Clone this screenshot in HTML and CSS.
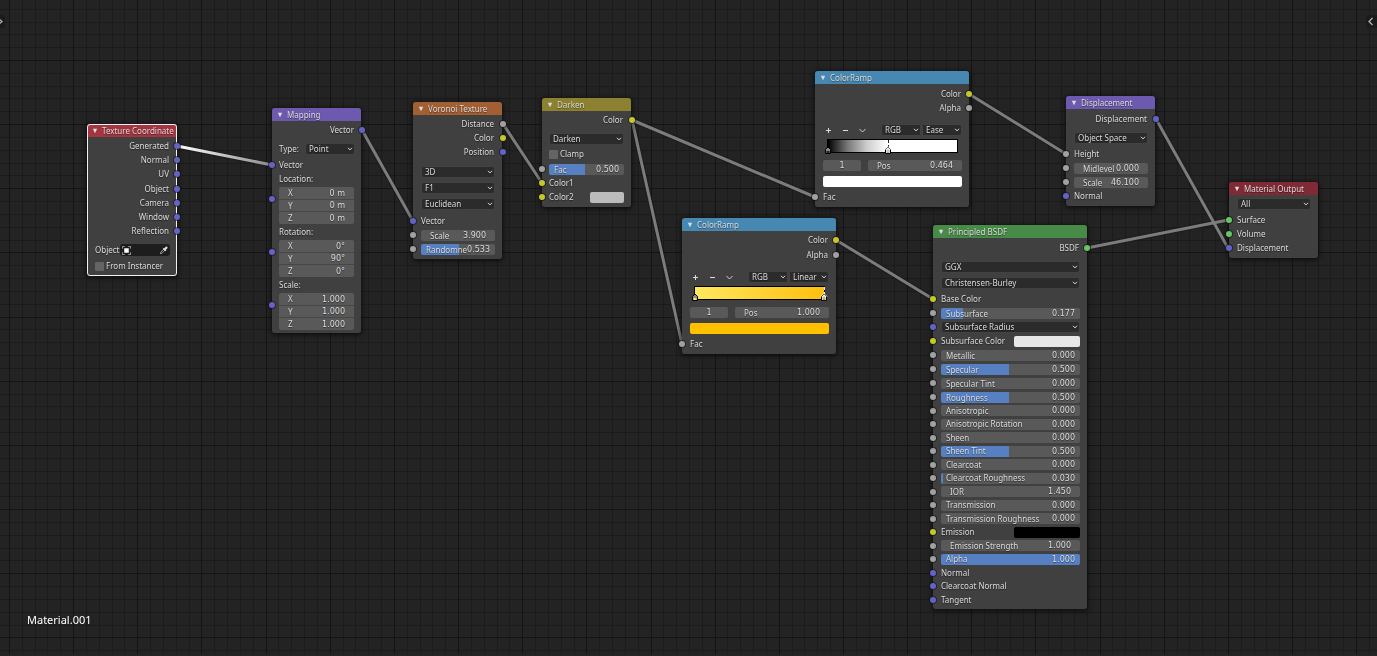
FILE: index.html
```html
<!DOCTYPE html>
<html lang="en">
<head>
<meta charset="utf-8">
<title>Shader Editor</title>
<link rel="stylesheet" href="styles.css">
</head>
<body>
<svg class="defs" aria-hidden="true">
  <symbol id="tri" viewBox="0 0 6 6"><path d="M0.800 0.800H5.200L3 5.200Z" fill="currentColor"/></symbol>
  <symbol id="chev" viewBox="0 0 6 4"><path d="M1 0.8L3 2.9L5 0.8" fill="none" stroke="currentColor" stroke-width="1"/></symbol>
  <symbol id="down" viewBox="0 0 9 9"><path d="M1.500 3L4.500 6L7.500 3" fill="none" stroke="currentColor" stroke-width="0.900"/></symbol>
  <symbol id="plus" viewBox="0 0 9 9"><path d="M4.500 2V7M2 4.500H7" fill="none" stroke="currentColor" stroke-width="1"/></symbol>
  <symbol id="minus" viewBox="0 0 9 9"><path d="M2 4.500H7" fill="none" stroke="currentColor" stroke-width="1"/></symbol>
  <symbol id="stop" viewBox="0 0 8 10"><path d="M1.500 8.500V4.500L4 2L6.500 4.500V8.500Z" fill="#8a8a8a" stroke="#000"/><rect x="2.500" y="6" width="3" height="2" fill="var(--stop)"/></symbol>
  <symbol id="stop-on" viewBox="0 0 8 10"><path d="M1.500 8.500V4.500L4 2L6.500 4.500V8.500Z" fill="#fff" stroke="#000"/><path d="M1 4.500L4 1.500L7 4.500" fill="none" stroke="#fff" stroke-width="0.800"/><path d="M3 7.700V5.500L4 4.500L5 5.500V7.700Z" fill="var(--stop)" stroke="#777" stroke-width="0.600"/></symbol>
</svg>

<main class="editor">
  <canvas class="grid" id="grid"></canvas>

  <svg class="links" aria-hidden="true">
    <defs>
      <linearGradient id="lit" gradientUnits="userSpaceOnUse" x1="177" y1="146" x2="272" y2="165"><stop offset="0" stop-color="#fff"/><stop offset="1" stop-color="#8a8a8a"/></linearGradient>
    </defs>
    <g class="link-edge">
      <path d="M177 146L272 165"/><path d="M362 130L413 221"/><path d="M503 124L542 183"/><path d="M632 120L815 197"/><path d="M632 120L682 344"/><path d="M836 240L933 299"/><path d="M969 94L1066 154"/><path d="M1156 119L1228 248"/><path d="M1087 248L1228 220"/>
    </g>
    <g class="link-core">
      <path d="M177 146L272 165" stroke="url(#lit)"/><path d="M362 130L413 221"/><path d="M503 124L542 183"/><path d="M632 120L815 197"/><path d="M632 120L682 344"/><path d="M836 240L933 299"/><path d="M969 94L1066 154"/><path d="M1156 119L1228 248"/><path d="M1087 248L1228 220"/>
    </g>
  </svg>

  <section class="node n-coord selected">
    <h2 class="head red"><svg><use href="#tri"/></svg>Texture Coordinate</h2>
    <div class="body">
      <div class="row out"><i class="sock vec"></i>Generated</div>
      <div class="row out"><i class="sock vec"></i>Normal</div>
      <div class="row out"><i class="sock vec"></i>UV</div>
      <div class="row out mt1"><i class="sock vec"></i>Object</div>
      <div class="row out"><i class="sock vec"></i>Camera</div>
      <div class="row out"><i class="sock vec"></i>Window</div>
      <div class="row out"><i class="sock vec"></i>Reflection</div>
      <div class="row tall mt4">
        <label for="obj">Object</label>
        <span class="objfield"><svg class="objicon" viewBox="0 0 10 10"><path d="M0.500 3V0.500H3M7 0.500H9.500V3M9.500 7V9.500H7M3 9.500H0.500V7" fill="none" stroke="#aaa"/><rect x="2.500" y="2.500" width="5" height="5" fill="#fff"/></svg><input id="obj" type="text"><button type="button" aria-label="Pick object"><svg viewBox="0 0 10 10"><path d="M1.500 8.500L2 6.800L5.500 3.300L6.800 4.600L3.300 8.100Z" fill="none" stroke="#bbb" stroke-width="0.900"/><path d="M4.800 2.500L7.600 5.300" stroke="#ddd" stroke-width="1.400"/><path d="M6.300 3.800L8.300 1.800" stroke="#ddd" stroke-width="2.400" stroke-linecap="round"/></svg></button></span>
      </div>
      <div class="row tall"><label class="check"><input type="checkbox">From Instancer</label></div>
    </div>
  </section>

  <section class="node n-map">
    <h2 class="head violet"><svg><use href="#tri"/></svg>Mapping</h2>
    <div class="body">
      <div class="row out"><i class="sock vec"></i>Vector</div>
      <div class="row tall mt4 typed"><label for="type">Type:</label><span class="pick"><select id="type"><option>Point</option></select><svg><use href="#chev"/></svg></span></div>
      <div class="row mt1"><i class="sock vec"></i>Vector</div>
      <div class="triple"><div class="row">Location:</div>
        <div class="stack"><i class="sock vec"></i><label class="num">X<input value="0 m"></label><label class="num">Y<input value="0 m"></label><label class="num">Z<input value="0 m"></label></div></div>
      <div class="triple"><div class="row">Rotation:</div>
        <div class="stack"><i class="sock vec"></i><label class="num">X<input value="0°"></label><label class="num">Y<input value="90°"></label><label class="num">Z<input value="0°"></label></div></div>
      <div class="triple"><div class="row">Scale:</div>
        <div class="stack"><i class="sock vec"></i><label class="num">X<input value="1.000"></label><label class="num">Y<input value="1.000"></label><label class="num">Z<input value="1.000"></label></div></div>
    </div>
  </section>

  <section class="node n-voronoi">
    <h2 class="head orange"><svg><use href="#tri"/></svg>Voronoi Texture</h2>
    <div class="body">
      <div class="row out"><i class="sock val"></i>Distance</div>
      <div class="row out"><i class="sock col"></i>Color</div>
      <div class="row out"><i class="sock vec"></i>Position</div>
      <div class="row tall mt5"><span class="pick"><select aria-label="Dimensions"><option>3D</option></select><svg><use href="#chev"/></svg></span></div>
      <div class="row tall"><span class="pick"><select aria-label="Feature"><option>F1</option></select><svg><use href="#chev"/></svg></span></div>
      <div class="row tall"><span class="pick"><select aria-label="Distance metric"><option>Euclidean</option></select><svg><use href="#chev"/></svg></span></div>
      <div class="row mt2"><i class="sock vec"></i>Vector</div>
      <div class="row"><i class="sock val"></i><label class="num">Scale<input value="3.900"></label></div>
      <div class="row"><i class="sock val"></i><label class="num slide" style="--fill:52%">Randomne<input value="0.533"></label></div>
    </div>
  </section>

  <section class="node n-darken">
    <h2 class="head olive"><svg><use href="#tri"/></svg>Darken</h2>
    <div class="body">
      <div class="row out"><i class="sock col"></i>Color</div>
      <div class="row tall mt4"><span class="pick"><select aria-label="Blend mode"><option>Darken</option></select><svg><use href="#chev"/></svg></span></div>
      <div class="row"><label class="check"><input type="checkbox">Clamp</label></div>
      <div class="row mt1"><i class="sock val"></i><label class="num slide" style="--fill:48%">Fac<input value="0.500"></label></div>
      <div class="row"><i class="sock col"></i>Color1</div>
      <div class="row"><i class="sock col"></i>Color2<button type="button" class="swatch half" style="--c:#bcbcbc" aria-label="Color2"></button></div>
    </div>
  </section>

  <section class="node wide n-ramp-a">
    <h2 class="head blue"><svg><use href="#tri"/></svg>ColorRamp</h2>
    <div class="body">
      <div class="row out mt1"><i class="sock col"></i>Color</div>
      <div class="row out"><i class="sock val"></i>Alpha</div>
      <div class="row tall mt7 tools">
        <button type="button" aria-label="Add stop"><svg><use href="#plus"/></svg></button><button type="button" aria-label="Remove stop"><svg><use href="#minus"/></svg></button><button type="button" aria-label="Tools"><svg><use href="#down"/></svg></button>
        <span class="pair"><span class="pick"><select aria-label="Color mode"><option>RGB</option></select><svg><use href="#chev"/></svg></span><span class="pick"><select aria-label="Interpolation"><option>Ease</option></select><svg><use href="#chev"/></svg></span></span>
      </div>
      <div class="ramp mono"><svg class="stop" style="left:0%;--stop:#222"><use href="#stop"/></svg><span class="tick" style="left:46.4%"></span><svg class="stop" style="left:46.4%;--stop:#eee"><use href="#stop-on"/></svg></div>
      <div class="row mt5 split"><input class="index" value="1" aria-label="Stop index"><label class="num">Pos<input value="0.464"></label></div>
      <div class="row mt2"><button type="button" class="swatch" style="--c:#fff" aria-label="Stop color"></button></div>
      <div class="row mt2"><i class="sock val"></i>Fac</div>
    </div>
  </section>

  <section class="node wide n-ramp-b">
    <h2 class="head blue"><svg><use href="#tri"/></svg>ColorRamp</h2>
    <div class="body">
      <div class="row out"><i class="sock col"></i>Color</div>
      <div class="row out mt1"><i class="sock val"></i>Alpha</div>
      <div class="row tall mt7 tools">
        <button type="button" aria-label="Add stop"><svg><use href="#plus"/></svg></button><button type="button" aria-label="Remove stop"><svg><use href="#minus"/></svg></button><button type="button" aria-label="Tools"><svg><use href="#down"/></svg></button>
        <span class="pair"><span class="pick"><select aria-label="Color mode"><option>RGB</option></select><svg><use href="#chev"/></svg></span><span class="pick"><select aria-label="Interpolation"><option>Linear</option></select><svg><use href="#chev"/></svg></span></span>
      </div>
      <div class="ramp gold"><svg class="stop" style="left:0%;--stop:#ffe45c"><use href="#stop"/></svg><span class="tick" style="left:100%"></span><svg class="stop" style="left:100%;--stop:#ffc000"><use href="#stop-on"/></svg></div>
      <div class="row mt5 split"><input class="index" value="1" aria-label="Stop index"><label class="num">Pos<input value="1.000"></label></div>
      <div class="row mt2"><button type="button" class="swatch" style="--c:#ffc000" aria-label="Stop color"></button></div>
      <div class="row mt2"><i class="sock val"></i>Fac</div>
    </div>
  </section>

  <section class="node n-disp">
    <h2 class="head violet"><svg><use href="#tri"/></svg>Displacement</h2>
    <div class="body">
      <div class="row out mt1"><i class="sock vec"></i>Displacement</div>
      <div class="row tall mt4"><span class="pick"><select aria-label="Space"><option>Object Space</option></select><svg><use href="#chev"/></svg></span></div>
      <div class="row mt1"><i class="sock val"></i>Height</div>
      <div class="row"><i class="sock val"></i><label class="num">Midlevel<input value="0.000"></label></div>
      <div class="row"><i class="sock val"></i><label class="num">Scale<input value="46.100"></label></div>
      <div class="row"><i class="sock vec"></i>Normal</div>
    </div>
  </section>

  <section class="node n-output">
    <h2 class="head crimson"><svg><use href="#tri"/></svg>Material Output</h2>
    <div class="body">
      <div class="row tall"><span class="pick"><select aria-label="Target"><option>All</option></select><svg><use href="#chev"/></svg></span></div>
      <div class="row mt1"><i class="sock shader"></i>Surface</div>
      <div class="row"><i class="sock shader"></i>Volume</div>
      <div class="row"><i class="sock vec"></i>Displacement</div>
    </div>
  </section>

  <section class="node wide n-bsdf">
    <h2 class="head green"><svg><use href="#tri"/></svg>Principled BSDF</h2>
    <div class="body">
      <div class="row out mt1"><i class="sock shader"></i>BSDF</div>
      <div class="row tall mt4"><span class="pick"><select aria-label="Distribution"><option>GGX</option></select><svg><use href="#chev"/></svg></span></div>
      <div class="row tall"><span class="pick"><select aria-label="Subsurface method"><option>Christensen-Burley</option></select><svg><use href="#chev"/></svg></span></div>
      <div class="row mt1"><i class="sock col"></i>Base Color</div>
      <div class="row"><i class="sock val"></i><label class="num slide" style="--fill:16%">Subsurface<input value="0.177"></label></div>
      <div class="row"><i class="sock vec"></i><span class="pick"><select aria-label="Subsurface Radius"><option>Subsurface Radius</option></select><svg><use href="#chev"/></svg></span></div>
      <div class="row"><i class="sock col"></i>Subsurface Color<button type="button" class="swatch half" style="--c:#e7e7e7" aria-label="Subsurface Color"></button></div>
      <div class="row"><i class="sock val"></i><label class="num slide" style="--fill:0%">Metallic<input value="0.000"></label></div>
      <div class="row"><i class="sock val"></i><label class="num slide" style="--fill:49%">Specular<input value="0.500"></label></div>
      <div class="row"><i class="sock val"></i><label class="num slide" style="--fill:0%">Specular Tint<input value="0.000"></label></div>
      <div class="row"><i class="sock val"></i><label class="num slide" style="--fill:49%">Roughness<input value="0.500"></label></div>
      <div class="tight">
        <div class="row"><i class="sock val"></i><label class="num slide" style="--fill:0%">Anisotropic<input value="0.000"></label></div>
        <div class="row"><i class="sock val"></i><label class="num slide" style="--fill:0%">Anisotropic Rotation<input value="0.000"></label></div>
        <div class="row"><i class="sock val"></i><label class="num slide" style="--fill:0%">Sheen<input value="0.000"></label></div>
        <div class="row"><i class="sock val"></i><label class="num slide" style="--fill:49%">Sheen Tint<input value="0.500"></label></div>
        <div class="row"><i class="sock val"></i><label class="num slide" style="--fill:0%">Clearcoat<input value="0.000"></label></div>
        <div class="row"><i class="sock val"></i><label class="num slide" style="--fill:1.5%">Clearcoat Roughness<input value="0.030"></label></div>
        <div class="row"><i class="sock val"></i><label class="num">IOR<input value="1.450"></label></div>
        <div class="row"><i class="sock val"></i><label class="num slide" style="--fill:0%">Transmission<input value="0.000"></label></div>
        <div class="row"><i class="sock val"></i><label class="num slide" style="--fill:0%">Transmission Roughness<input value="0.000"></label></div>
        <div class="row"><i class="sock col"></i>Emission<button type="button" class="swatch half" style="--c:#000" aria-label="Emission"></button></div>
        <div class="row"><i class="sock val"></i><label class="num">Emission Strength<input value="1.000"></label></div>
        <div class="row"><i class="sock val"></i><label class="num slide" style="--fill:100%">Alpha<input value="1.000"></label></div>
        <div class="row"><i class="sock vec"></i>Normal</div>
        <div class="row"><i class="sock vec"></i>Clearcoat Normal</div>
        <div class="row"><i class="sock vec"></i>Tangent</div>
      </div>
    </div>
  </section>

  <button type="button" class="tab left" aria-label="Show toolbar"><svg viewBox="0 0 5 9"><path d="M-1.500 1.500L2 4.500L-1.500 7.500" fill="none" stroke="#bbb" stroke-width="1.200"/></svg></button>
  <button type="button" class="tab right" aria-label="Show sidebar"><svg viewBox="0 0 5 9"><path d="M4.500 1L1 4.500L4.500 8" fill="none" stroke="#bbb" stroke-width="1.200"/></svg></button>
  <p class="material">Material.001</p>
</main>
<script src="grid.js"></script>
</body>
</html>
```
FILE: styles.css
```css
* { box-sizing: border-box; }

html, body { height: 100%; margin: 0; }

body {
  background: #232323;
  color: #dcdcdc;
  font: 8px/12px "Noto Sans", sans-serif;
  overflow: hidden;
}

.defs { position: absolute; width: 0; height: 0; }

button { padding: 0; border: 0; background: none; color: inherit; }
input, select { font: inherit; color: inherit; text-shadow: inherit; }

.editor {
  position: relative;
  height: 100%;
  border-bottom: 2px solid #272325;
  overflow: hidden;
}

.grid, .links { position: absolute; inset: 0; width: 100%; height: 100%; }
.link-edge { fill: none; stroke: #151515; stroke-opacity: 0.5; stroke-width: 5; }
.link-core { fill: none; stroke: #7c7c7c; stroke-width: 3; }

/* Nodes on the free canvas */
.node {
  position: absolute;
  width: 89px;
  border-radius: 3px;
  background: rgba(66, 66, 66, 0.95);
  box-shadow: 0 1px 5px 1px rgba(0, 0, 0, 0.6);
  text-shadow: 0 1px 1px rgba(0, 0, 0, 0.5);
}
.node.wide { width: 154px; }
.node.selected { width: 90px; outline: 1px solid #f2f2f2; outline-offset: -1px; }

.n-coord { left: 87px; top: 124px; }
.n-map { left: 272px; top: 108px; }
.n-voronoi { left: 413px; top: 102px; }
.n-darken { left: 542px; top: 98px; }
.n-ramp-a { left: 815px; top: 71px; }
.n-ramp-b { left: 682px; top: 218px; }
.n-disp { left: 1066px; top: 96px; }
.n-output { left: 1229px; top: 182px; }
.n-bsdf { left: 933px; top: 225px; }

.head {
  display: flex;
  align-items: center;
  gap: 4px;
  height: 13px;
  margin: 0;
  padding-left: 5px;
  border-radius: 3px 3px 0 0;
  font-size: 8px;
  font-weight: 400;
  white-space: nowrap;
}
.head svg { width: 6px; height: 6px; flex: none; }
.red { background: #a43641; }
.violet { background: #6d5aae; }
.orange { background: #a15f33; }
.olive { background: #8c8130; }
.blue { background: #4788b2; }
.crimson { background: #7f2a34; }
.green { background: #488a47; }

.body { padding: 2px 0 3px; }
.n-output .body { padding-top: 1px; }
.n-coord .body { padding-bottom: 2px; }

.row {
  position: relative;
  display: flex;
  align-items: center;
  height: 14px;
  padding: 0 7px 0 8px;
  white-space: nowrap;
}
.row.tall { height: 16px; }
.row.out { justify-content: flex-end; padding-right: 8px; }
.tight .row:nth-child(odd) { height: 13px; }
.mt1 { margin-top: 1px; }
.mt2 { margin-top: 2px; }
.mt4 { margin-top: 4px; }
.mt5 { margin-top: 5px; }
.mt7 { margin-top: 7px; }

/* Sockets sit over the node border */
.sock {
  position: absolute;
  left: -3px;
  top: 50%;
  width: 6px;
  height: 6px;
  margin-top: -3px;
  border-radius: 50%;
  box-shadow: 0 0 0 1px rgba(20, 20, 20, 0.6);
}
.out .sock { left: auto; right: -4px; }
.wide .out .sock, .selected .out .sock { right: -3px; }
.stack .sock { top: 12px; }
.vec { background: #6363c7; }
.val { background: #a1a1a1; }
.col { background: #c7c729; }
.shader { background: #63c763; }

/* Drop-downs */
.pick { position: relative; display: flex; flex: 1; min-width: 0; }
.pick select {
  appearance: none;
  width: 100%;
  height: 12px;
  padding: 0 8px 0 3px;
  border: 1px solid #424242;
  border-radius: 3px;
  background: #2b2b2b;
  line-height: 10px;
}
.pick svg { position: absolute; right: 2px; top: 4px; width: 6px; height: 4px; pointer-events: none; }
.typed { gap: 6px; }
.typed .pick { flex: none; width: 50px; margin-left: auto; }

/* Number fields */
.num {
  display: flex;
  align-items: center;
  flex: 1;
  min-width: 0;
  height: 11px;
  margin-top: 1px;
  padding: 0 9px;
  border-radius: 2px;
  background: #595959;
}
.num input {
  flex: 1;
  width: 0;
  height: 11px;
  padding: 1px 0 0;
  border: 0;
  background: none;
  font-family: "DejaVu Sans", sans-serif;
  text-align: right;
}
.slide {
  padding: 0 5px;
  background: linear-gradient(90deg, #5680c2 var(--fill), #595959 var(--fill));
}
.tight .num { margin-top: 0; }

.triple + .triple { margin-top: 1px; }
.stack {
  position: relative;
  display: flex;
  flex-direction: column;
  margin-top: 1px;
  padding: 0 7px;
}
.stack .num { flex: none; height: 12px; margin: 0; border-radius: 0; }
.stack .num:nth-of-type(2) { height: 13px; border: solid #464646; border-width: 1px 0; }
.stack .num:nth-of-type(1) { border-radius: 2px 2px 0 0; }
.stack .num:nth-of-type(3) { border-radius: 0 0 2px 2px; }
.n-map .row { padding-left: 7px; }
.n-map .row.out { padding-right: 7px; }

/* Check boxes */
.check { display: flex; align-items: center; gap: 2px; }
.check input {
  appearance: none;
  width: 9px;
  height: 9px;
  margin: 0;
  border-radius: 1px;
  background: #646464;
}
.n-darken .row { padding-left: 7px; }

/* Object picker */
.objfield {
  display: flex;
  align-items: center;
  flex: 1;
  min-width: 0;
  height: 12px;
  margin-left: 1px;
  padding: 0 2px;
  border-radius: 3px;
  background: #1d1d1d;
}
.objfield svg { display: block; width: 9px; height: 9px; flex: none; }
.objfield input { flex: 1; width: 0; height: 10px; padding: 0; border: 0; background: none; }

/* Swatches */
.swatch { flex: 1; height: 11px; border-radius: 2px; background: var(--c); }
.swatch.half { flex: none; width: 66px; margin-left: auto; }
.n-darken .swatch.half { width: 34px; }

/* Color ramp */
.tools { gap: 8px; padding-left: 9px; }
.tools button svg { display: block; width: 9px; height: 9px; }
.pair { display: flex; width: 81px; margin-left: auto; gap: 1px; }
.pair .pick:first-child select { border-radius: 3px 0 0 3px; }
.pair .pick:last-child select { border-radius: 0 3px 3px 0; }
.ramp {
  position: relative;
  height: 14px;
  margin: 1px 11px 0 12px;
  border: 1px solid #000;
}
.mono { background: linear-gradient(90deg, #000 0%, #777 15%, #ccc 30%, #fff 46%); }
.gold { background: linear-gradient(90deg, #ffe85f, #ffc00f); }
.stop { position: absolute; bottom: -3px; width: 8px; height: 10px; margin-left: -4px; }
.tick { position: absolute; top: 0; height: 8px; border-left: 1px dashed #222; }
.gold .tick { border-color: #eee; }
.split { gap: 7px; }
.index {
  width: 38px;
  height: 11px;
  margin-top: 1px;
  padding: 1px 0 0;
  border: 0;
  border-radius: 2px;
  background: #595959;
  text-align: center;
  font-family: "DejaVu Sans", sans-serif;
}

/* Region toggles and the material name */
.tab {
  position: absolute;
  top: 15px;
  display: flex;
  align-items: center;
  height: 13px;
  background: #1b1b1b;
}
.tab svg { width: 5px; height: 9px; }
.tab.left { left: 0; border-radius: 0 3px 3px 0; }
.tab.right { right: 0; width: 11px; padding-left: 2px; border-radius: 3px 0 0 3px; }
.material {
  position: absolute;
  left: 27px;
  bottom: 26px;
  margin: 0;
  color: #fff;
  font-size: 11px;
  line-height: 16px;
}
```
FILE: grid.js
```js
// Draws the editor's background grid on whole pixels: a heavier line every fifth step.
const canvas = document.getElementById("grid");

function drawGrid() {
  const step = 64.15 / 5;
  const w = canvas.clientWidth;
  const h = canvas.clientHeight;
  canvas.width = w;
  canvas.height = h;
  const ctx = canvas.getContext("2d");
  for (const major of [false, true]) {
    ctx.fillStyle = major ? "#141414" : "#1b1b1b";
    for (let i = -5; i * step < Math.max(w, h); i++) {
      if ((i % 5 === 0) !== major) continue;
      ctx.fillRect(Math.round(9 + i * step), 0, 1, h);
      ctx.fillRect(0, Math.round(60 + i * step), w, 1);
    }
  }
}

drawGrid();
addEventListener("resize", drawGrid);
```
